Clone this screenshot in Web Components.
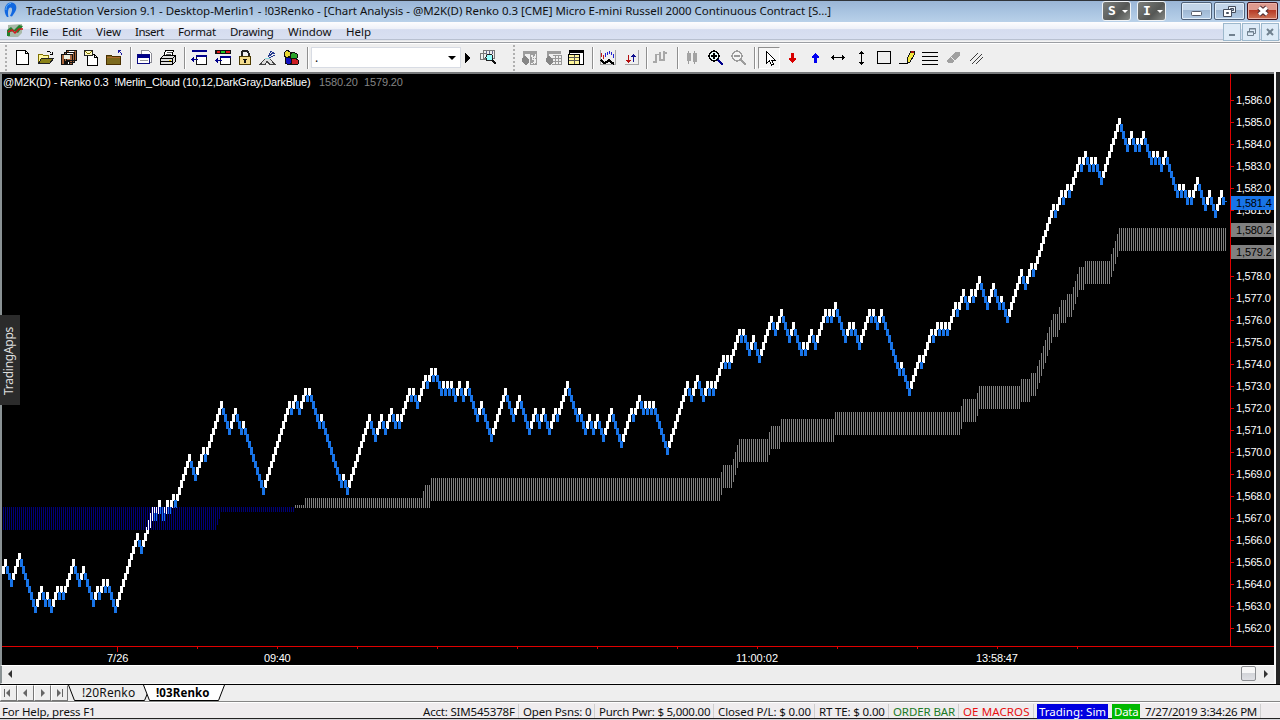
<!DOCTYPE html>
<html lang="en">
<head>
<meta charset="utf-8">
<title>TradeStation Version 9.1</title>
<style>
  :root {
    --ui-font: "Noto Sans", "Open Sans", sans-serif;
    --chart-font: "Liberation Sans", Arial, sans-serif;
  }
  html, body {
    margin: 0;
    width: 1280px;
    height: 720px;
    overflow: hidden;
    background: #efefef;
    font-family: var(--ui-font);
    color: #111;
  }
</style>
</head>
<body>
<trade-app></trade-app>
<script>
// Text whose letter spacing is set so that it is exactly `w` pixels wide
class FitText extends HTMLElement {
  constructor() {
    super();
    this.attachShadow({ mode: "open" });
  }

  connectedCallback() {
    this.shadowRoot.innerHTML = `<style>
        :host { display: block; white-space: pre; }
        span { display: inline-block; }
      </style><span><slot></slot></span>`;
    const span = this.shadowRoot.querySelector("span");
    const target = Number(this.getAttribute("w"));
    if (!target) return;
    const natural = span.offsetWidth;
    const size = this.textContent.length;
    span.style.letterSpacing = `${(target - natural) / size}px`;
    this.style.width = `${target}px`;
  }
}

class WindowButton extends HTMLElement {
  constructor() {
    super();
    this.attachShadow({ mode: "open" });
  }

  connectedCallback() {
    const icons = {
      min: `<rect x="10.500" y="9.500" width="10" height="4" rx="1" fill="#fff" stroke="#555c6b"/>`,
      restore: `<path d="M14.500 4.500h7v6h-7z" fill="#eef4fb" stroke="#444c5b"/><path d="M16.500 6.500h3v2h-3z" fill="#9db4d0" stroke="#444c5b"/><path d="M9.500 7.500h8v7h-8z" fill="#fff" stroke="#444c5b"/><path d="M12.500 10.500h2v1h-2z" fill="#9db4d0" stroke="#444c5b"/>`,
      close: `<path d="M12 5.500l8 7M20 5.500l-8 7" stroke="#4a2a2e" stroke-width="5"/><path d="M12 5.500l8 7M20 5.500l-8 7" stroke="#fff" stroke-width="3"/>`,
    };
    const kind = this.getAttribute("kind");
    this.shadowRoot.innerHTML = `
      <style>
        :host {
          display: block;
          box-sizing: border-box;
          width: 31px;
          height: 18px;
          border: 1px solid #4f6077;
          border-radius: 2px;
          box-shadow: inset 0 0 0 1px #e1edf8;
          background: linear-gradient(#c3d5e9 0 45%, #9fb7d2 46%, #b3cce6);
        }
        :host([kind="close"]) {
          border-color: #43141c;
          box-shadow: inset 0 0 0 1px #eab1a6;
          background: linear-gradient(#dd9a8e 0 45%, #b63a26 46%, #cf7558);
        }
        svg { display: block; margin: -1px; }
      </style>
      <svg width="31" height="18" fill="none">${icons[kind]}</svg>
    `;
  }
}

class LetterButton extends HTMLElement {
  constructor() {
    super();
    this.attachShadow({ mode: "open" });
    this.shadowRoot.innerHTML = `
      <style>
        :host {
          display: flex;
          box-sizing: border-box;
          width: 29px;
          height: 20px;
          padding-left: 5px;
          gap: 6px;
          align-items: center;
          border: 1px solid #eef2f5;
          border-radius: 3px;
          background: linear-gradient(135deg, #7c7f7c, #555755 60%, #868986);
          color: #fff;
          font: bold 13px/18px "DejaVu Sans Mono", monospace;
        }
        i { border: 3px solid transparent; border-top-color: #fff; border-bottom: 0; }
      </style>
      <slot></slot><i></i>
    `;
  }
}

class TitleBar extends HTMLElement {
  constructor() {
    super();
    this.attachShadow({ mode: "open" });
    this.shadowRoot.innerHTML = `
      <style>
        :host {
          display: flex;
          box-sizing: border-box;
          height: 22px;
          padding: 0 2px 0 3px;
          border-top: 1px solid #30343a;
          background: linear-gradient(#9ab5d6, #a9c4e1 50%, #b9d1e9);
        }
        svg { margin-right: 7px; }
        .title { font-size: 11.5px; line-height: 20px; flex: 1; }
        .letters { display: flex; gap: 6px; margin-right: 15px; }
        .buttons { display: flex; gap: 2px; padding-top: 1px; }
      </style>
      <svg width="16" height="20">
        <path d="M4 16C0 11 1 3 7 1.500c6-1 8 5 5 9.500L9 15.500 7 15c2-4 3-7.500 1-8.500C5 6 4.500 11 5.500 16z" fill="#1268e0"/>
        <path d="M3 9C3 5 5 2.500 8 2.500" stroke="#5fb4ff" fill="none"/>
      </svg>
      <div class="title"><fit-text w="805">TradeStation Version 9.1 - Desktop-Merlin1 - !03Renko - [Chart Analysis - @M2K(D) Renko 0.3 [CME] Micro E-mini Russell 2000 Continuous Contract [S...]</fit-text></div>
      <div class="letters"><letter-button>S</letter-button><letter-button>I</letter-button></div>
      <div class="buttons">
        <window-button kind="min"></window-button>
        <window-button kind="restore"></window-button>
        <window-button kind="close"></window-button>
      </div>
    `;
  }
}

class MenuBar extends HTMLElement {
  constructor() {
    super();
    this.attachShadow({ mode: "open" });
  }

  connectedCallback() {
    const items = [["File", 18], ["Edit", 20], ["View", 25], ["Insert", 29], ["Format", 38], ["Drawing", 44], ["Window", 44], ["Help", 25]];
    this.shadowRoot.innerHTML = `
      <style>
        :host {
          display: flex;
          box-sizing: border-box;
          height: 21px;
          padding: 0 1px 0 7px;
          border-bottom: 1px solid #9b9ea3;
          background: linear-gradient(#fdfdfe, #eef1f8 34%, #d5dcef 38%, #d9e0f1 84%, #aab4c8 86%, #f4f4f4 94%);
          font-size: 11.5px;
          line-height: 20px;
        }
        nav { display: flex; flex: 1; gap: 14px; margin-left: 7px; }
        .mdi { display: flex; gap: 1px; padding-top: 1px; }
        .mdi svg { width: 16px; height: 16px; border: 1px solid #9db8cc; background: #deebf7; }
      </style>
      <svg width="16" height="20">
        <path d="M1 3l14-1v9l-4 4H1z" fill="#a9b9a9"/>
        <path d="M0 14V8l4-3 3 3 5-5 4 1-5 7-4-2-4 1v4z" fill="#23812f"/>
        <path d="M1 10l4-2 3 3 4-4h4" stroke="#d3171e" stroke-width="1.500" fill="none"/>
      </svg>
      <nav>${items.map(([text, w]) => `<fit-text w="${w}">${text}</fit-text>`).join("")}</nav>
      <div class="mdi">
        <svg><path d="M5 10h6v2H5z" fill="#71818f"/></svg>
        <svg fill="none" stroke="#71818f"><path d="M6.500 7V4.500h6v5H11M6 5h7"/><path d="M4.500 7.500h6v4h-6zM4 8h7"/></svg>
        <svg stroke="#71818f" stroke-width="2"><path d="M5 5l6 6M11 5l-6 6"/></svg>
      </div>
    `;
  }
}

const ICONS = {
  page: `<path d="M1.500.5h9l3 3v11h-12z" fill="#fff" stroke="#000"/><path d="M10.500.5v3h3" fill="none" stroke="#000"/>`,
  open: `<path d="M.5 13.500v-9h4l1 1h5v3" fill="#fff8a0" stroke="#807000"/><path d="M.5 13.500l3-5h12l-4 5z" fill="#8a8218" stroke="#222"/><path d="M9 1h3v1H9zM12 2h1v1h-1zM12 4h3v1h-3zM14 2h1v3h-1z" fill="#000"/>`,
  saves: `<path d="M5.500.5h10v10h-10zM3.500 2.500h10v10h-10zM.5 4.500h11v10H.5z" fill="#a8663c" stroke="#111"/><path d="M3 5h6v4H3z" fill="#f1f1e0"/><path d="M3 11h6v3H3z" fill="#111"/><path d="M7 12h1v2H7z" fill="#fff"/><path d="M6 3h6v1H6zM8 1h5v1H8z" fill="#fff"/>`,
  mail: `<path d="M4.500 4.500h7l3 3v8h-10z" fill="#fff" stroke="#000"/><path d="M11.500 4.500v3h3" fill="none" stroke="#000"/><path d="M1.500.5h8v5h-8z" fill="#fffbc4" stroke="#222"/><path d="M2 1h1v1H2zM3 2h1v1H3zM4 3h3v1H4zM7 2h1v1H7zM8 1h1v1H8z" fill="#857800"/>`,
  folder: `<path d="M.5 14.500v-9h5l1 1h8v8z" fill="#7c6a1f" stroke="#4a3000"/><path d="M1 7h13v1H1z" fill="#b06d30"/><path d="M12 0h3v1h-3zM12 1h1v2h-1zM13 1h1v1h-1zM14 2h1v1h-1zM15 3h1v2h-1z" fill="#1a1aa0"/>`,
  window: `<path d="M4.500.5h7l3 3v9h-10z" fill="#fff" stroke="#8d8d96"/><path d="M.5 4.500h12v9H.5z" fill="#fff" stroke="#0a0a80"/><path d="M1 5h12v3H1z" fill="#00008b"/><path d="M3 10h8v1H3z" fill="#9a9a9a"/>`,
  print: `<path d="M5.500.5h8l-2 6h-8z" fill="#fff" stroke="#000"/><path d="M7 2.500h5M6 4.500h5" stroke="#555"/><path d="M.5 8.500l3-3h12v6l-3 3H.5z" fill="#ddd" stroke="#000"/><path d="M.5 8.500h12v6M1 11.500h11M12.500 8.500l3-3" fill="none" stroke="#000"/><path d="M9 10h2v1H9z" fill="#e2c900"/>`,
  windowBack: `<path d="M1 0h15v2H1z" fill="#00008b"/><path d="M5.500 5.500h10v9h-10z" fill="#fff" stroke="#111"/><path d="M5 5h11v2H5z" fill="#00008b"/><path d="M0 9h7v1H0zM1 8h2v3H1zM2 7h1v5H2z" fill="#00008b"/>`,
  windowTabs: `<path d="M0 0h16v4H0z" fill="#111"/><path d="M2 1h3v2H2z" fill="#e01616"/><path d="M6 1h4v2H6z" fill="#22c522"/><path d="M11 1h4v2h-4z" fill="#e01616"/><path d="M5.500 6.500h10v8h-10z" fill="#fff" stroke="#111"/><path d="M5 6h11v2H5z" fill="#00008b"/><path d="M0 10h7v1H0zM1 9h2v3H1zM2 8h1v5H2z" fill="#00008b"/>`,
  lock: `<path d="M4.500 6V3q0-2.500 3.500-2.500T11.500 3v3" fill="none" stroke="#222" stroke-width="2"/><path d="M2.500 6.500h11v8h-11z" fill="#f3dc8d" stroke="#4d3b00"/><path d="M6 9h4v1H9v3H7v-3H6z" fill="#111"/>`,
  dish: `<path d="M8 7l3-6M8 7l6-5M9 8l6-3M10 1l5 3" fill="none" stroke="#253a90"/><path d="M5 8h5v4H5z" fill="#8fd9dd"/><path d="M5 9l-5 5.500h5l2-3 3 3h5L10 9" fill="#ddd" stroke="#444"/>`,
  cubes: `<path d="M1 3l3-3 3 2v4l-3 2-3-2z" fill="#ead832" stroke="#111"/><path d="M7 4l3-2 4 2v4l-3 2-4-2z" fill="#2aa32a" stroke="#111"/><path d="M2 8l3-1 4 2v4l-3 2-4-2z" fill="#1010c0" stroke="#111"/><path d="M8 9l4-1 3 2v4l-4 1-3-1z" fill="#cc1d22" stroke="#111"/>`,
  play: `<path d="M1 3l5 5-5 5z" fill="#000"/>`,
  find: `<path d="M3.500.5h11v8h-11zM.5 3.500h6v6h-6z" fill="#eee" stroke="#777"/><path d="M6.500 1v3M9.500 1v3M12.500 1v3" stroke="#668"/><circle cx="9.500" cy="7.500" r="3.500" fill="#9ff" stroke="#222"/><path d="M12 10l4 4" stroke="#111" stroke-width="2"/>`,
  grayMoney: `<path d="M1 1h14v3H1zM1 4h2v5H1zM8 4h7v11H8z" fill="#9d9d9d"/><path d="M0 8l3-2 4 3v4l-3 2-4-3z" fill="#858585"/><path d="M9 5h2v2H9zM13 4h1v3h-1zM9 13h2v1H9zM4 5h3v1H4z" fill="#eee"/><path d="M13.500 7h-3v2.500h3v3h-3M12 6v8" stroke="#eee" fill="none"/>`,
  grayGrid: `<path d="M1 1h14v3H1zM1 4h2v5H1z" fill="#9d9d9d"/><path d="M7 5.500h8.500v9H6M6 8.500h9M6 11.500h9M9.500 5v9M12.500 5v9" stroke="#999" fill="none"/><path d="M0 8l3-2 4 3v4l-3 2-4-3z" fill="#858585"/>`,
  table: `<path d="M1.500.5h14v14h-10v-10h-4z" fill="#fff" stroke="#000"/><path d="M1 0h15v3H1z" fill="#000"/><path d="M.5 4.500h11v10H.5z" fill="#fff69a" stroke="#000"/><path d="M1 7.500h10M1 10.500h10M6.500 5v9" stroke="#555"/>`,
  study: `<path d="M.5 0v14.500H15M15.500 0v15" stroke="#a5a5a5" fill="none"/><path d="M1 3h1v4H1zM3 5h1v4H3z" fill="#c01818"/><path d="M5 3h1v4H5zM7 2h1v3H7zM9 1h1v3H9zM11 2h1v3h-1zM13 4h1v4h-1z" fill="#2222d0"/><path d="M1 10l3 3 3-1 2-2 2 2 3 2" stroke="#000" stroke-width="2" fill="none"/>`,
  sort: `<path d="M.5 14.500h14V0" fill="none" stroke="#a5a5a5"/><path d="M4 5h1v5h2l-2.500 3L2 10h2z" fill="#b41010"/><path d="M9 12h1V7h2L9.500 4 7 7h2z" fill="#101090"/>`,
  bars: `<path d="M3 4h2v9H3zM1 11h2v2H1zM5 4h2v1H5zM7 2h2v9H7zM9 9h2v2H9zM11 1h2v10h-2zM13 2h2v2h-2z" fill="#a8a8a8"/>`,
  candles: `<path d="M4.500 1v13M10.500 1v13" stroke="#9b9b9b"/><path d="M3 3h4v8H3zM9 3h4v9H9z" fill="#a3a3a3"/>`,
  zoomIn: `<circle cx="6" cy="6" r="5" fill="#eafcfc" stroke="#000" stroke-width="1.500"/><path d="M3 6h6M6 3v6" stroke="#000" stroke-width="2"/><path d="M10 10l5 5" stroke="#00008b" stroke-width="2.500"/>`,
  zoomOut: `<circle cx="6" cy="6" r="5" fill="#f5f5f5" stroke="#9c9c9c" stroke-width="1.500"/><path d="M3 6h6" stroke="#999" stroke-width="2"/><path d="M10 10l5 5" stroke="#9c9c9c" stroke-width="2.500"/>`,
  pointer: `<path d="M4.500 1.500v12l3-2.500 2 4 2-1-2-4h3.500z" fill="#fff" stroke="#000"/>`,
  down: `<path d="M6 3h3v5h2v1l-3.500 4L4 9V8h2z" fill="#d80000"/>`,
  up: `<path d="M6 13h3V8h2V7L7.500 3 4 7v1h2z" fill="#0000f0"/>`,
  horizontal: `<path d="M1 7h14v1H1zM2 6h1v3H2zM3 5h1v5H3zM13 6h1v3h-1zM12 5h1v5h-1z" fill="#000"/>`,
  vertical: `<path d="M8 1h1v14H8zM7 2h3v1H7zM6 3h5v1H6zM7 13h3v1H7zM6 12h5v1H6z" fill="#000"/>`,
  square: `<path d="M1.500 1.500h13v12h-13z" fill="none" stroke="#000"/>`,
  pencil: `<path d="M0 13.500h9" stroke="#000"/><path d="M8 13V9l4-8h3v4l-4 7z" fill="#f4e73c" stroke="#111"/><path d="M12 1h3v2h-3z" fill="#9c1010"/>`,
  lines: `<path d="M0 2.500h16M0 6.500h16M0 10.500h16M0 14.500h16" stroke="#000"/>`,
  eraser: `<path d="M1 10l8-8h5v3l-7 8H2z" fill="#a0a0a0"/><path d="M5 7l4 4" stroke="#eee"/>`,
  diagonals: `<path d="M1.500 10.500l8-8M3.500 13.500l10-10M7.500 13.500l7-7" stroke="#111" stroke-width=".8"/>`,
};

class ToolIcon extends HTMLElement {
  constructor() {
    super();
    this.attachShadow({ mode: "open" });
  }

  connectedCallback() {
    this.shadowRoot.innerHTML = `
      <style>
        :host { display: block; width: 16px; height: 16px; }
        svg { display: block; overflow: visible; }
      </style>
      <svg width="16" height="16" shape-rendering="crispEdges">${ICONS[this.getAttribute("name")]}</svg>
    `;
  }
}

class ToolBar extends HTMLElement {
  constructor() {
    super();
    this.attachShadow({ mode: "open" });
  }

  connectedCallback() {
    // [item, gap before it]
    const items = [
      ["grip", 5], ["page", 8], ["open", 7], ["saves", 7], ["mail", 6], ["folder", 7], ["sep", 8],
      ["window", 5], ["print", 7], ["sep", 8],
      ["windowBack", 5], ["windowTabs", 8], ["lock", 6], ["dish", 7], ["cubes", 7], ["sep", 8],
      ["combo", 2], ["play", 3], ["find", 0],
      ["grip", 17], ["grayMoney", 7], ["grayGrid", 8], ["table", 6], ["sep", 8],
      ["study", 6], ["sort", 8], ["sep", 6], ["bars", 4], ["sep", 9],
      ["candles", 5], ["zoomIn", 8], ["zoomOut", 7], ["sep", 7],
      ["pointer", 2], ["down", 5], ["up", 7], ["horizontal", 6], ["vertical", 7], ["square", 7],
      ["pencil", 7], ["lines", 7], ["eraser", 8], ["diagonals", 6],
    ];
    const item = ([name, gap]) => {
      const style = `style="margin-left:${gap}px"`;
      if (name === "grip" || name === "sep") return `<i class="${name}" ${style}></i>`;
      if (name === "combo") return `<div class="combo" ${style}><span>.</span><b></b></div>`;
      if (name === "pointer") return `<div class="pressed" ${style}><tool-icon name="pointer"></tool-icon></div>`;
      return `<tool-icon name="${name}" ${style}></tool-icon>`;
    };
    this.shadowRoot.innerHTML = `
      <style>
        :host {
          display: flex;
          box-sizing: border-box;
          height: 31px;
          padding-bottom: 1px;
          align-items: center;
          border-top: 1px solid #fff;
          border-bottom: 2px solid #77797b;
          background: #efefef;
        }
        .grip { width: 2px; height: 26px; background: repeating-linear-gradient(#b0b0b0 0 2px, #efefef 2px 4px); }
        .sep { box-sizing: border-box; width: 2px; height: 22px; border-left: 1px solid #8f8f8f; background: #fff; }
        .combo {
          display: flex;
          box-sizing: border-box;
          width: 150px;
          height: 21px;
          padding: 0 4px 0 3px;
          justify-content: space-between;
          align-items: center;
          border: 1px solid #d8dce4;
          background: #fff;
          font-size: 12px;
        }
        .combo b { border: 4px solid transparent; border-top-color: #000; border-bottom: 0; }
        .pressed {
          box-sizing: border-box;
          width: 22px;
          height: 22px;
          padding: 2px 3px;
          border: 1px solid #8f8f8f;
          border-right-color: #fff;
          border-bottom-color: #fff;
          background: #f6f6f6;
        }
      </style>
      ${items.map(item).join("")}
    `;
  }
}

// Renko bricks stand on a 2px grid; each one is a level above or below the one before.
// The list holds the columns at which the direction turns, starting with a rise.
const FIRST_COLUMN = 1;
const FIRST_LEVEL = 68;
const TURNS = [
  2, 5, 9, 17, 20, 22, 23, 25, 28, 29, 30, 31, 36, 39, 41, 46, 48, 49, 51, 52, 53, 57, 68, 70,
  76, 77, 79, 81, 83, 84, 86, 87, 94, 97, 101, 102, 110, 114, 117, 120, 121, 131, 144, 145, 147,
  149, 152, 153, 154, 159, 160, 170, 171, 173, 184, 187, 190, 192, 195, 197, 198, 199, 204, 205,
  206, 208, 212, 213, 215, 216, 217, 220, 221, 222, 223, 224, 225, 227, 229, 231, 233, 238, 240,
  245, 252, 256, 259, 264, 267, 269, 271, 274, 277, 278, 283, 288, 289, 292, 294, 296, 298, 301,
  305, 310, 315, 316, 319, 321, 322, 323, 324, 325, 326, 333, 343, 345, 348, 351, 353, 354, 355,
  356, 361, 362, 363, 364, 369, 370, 371, 374, 376, 379, 385, 387, 390, 394, 396, 400, 401, 402,
  405, 407, 412, 413, 414, 415, 417, 422, 424, 425, 426, 429, 434, 435, 436, 438, 440, 449, 450,
  454, 459, 460, 465, 466, 468, 469, 470, 471, 472, 473, 477, 478, 481, 483, 485, 486, 489, 493,
  496, 499, 500, 503, 510, 512, 515, 516, 526, 527, 530, 531, 533, 534, 539, 540, 542, 544, 545,
  546, 547, 550, 559, 563, 565, 567, 568, 569, 571, 575, 576, 577, 578, 580, 582, 588, 589, 590,
  591, 593, 594, 595, 598, 602, 604, 607, 610, 611,
];

class RenkoPlot extends HTMLElement {
  constructor() {
    super();
    this.attachShadow({ mode: "open" });
  }

  connectedCallback() {
    const top = 74;
    const levelY = (level) => Math.round(117.81 + level * 6.592) - top;
    const paths = { up: "", down: "", gray: "", blue: "" };

    let level = FIRST_LEVEL;
    let rising = true;
    let turn = 0;
    let high = Infinity;
    for (let col = FIRST_COLUMN; col <= 612; col++) {
      if (col <= 611) {
        if (col > FIRST_COLUMN) level += rising ? -1 : 1;
        const y = levelY(level);
        const height = levelY(level + 1) - y + 1;
        paths[rising ? "up" : "down"] += `M${col * 2} ${y}h3v${height}h-3z`;
        high = Math.min(high, y);
        if (col === TURNS[turn]) {
          rising = !rising;
          turn++;
        }
      }

      // the cloud trails the highest brick by five points
      const x = col * 2 + 1;
      const upper = high + 110;
      const middle = 507 - top;
      if (upper > middle) {
        const end = Math.min(upper + 1, 530 - top);
        paths.blue += `M${x} ${middle}h1V${end}h-1z`;
      } else {
        const end = Math.min(upper + 23, middle + 1);
        paths.gray += `M${x} ${upper}h1V${end}h-1z`;
      }
    }

    let ticks = "";
    for (let x = 197; x < 1100; x += 80) ticks += `M${x} 572h1v3h-1z`;
    for (let y = 26; y < 560; y += 22) ticks += `M1231 ${y}h3v1h-3z`;

    this.shadowRoot.innerHTML = `
      <style>
        :host { display: block; }
        svg { display: block; }
      </style>
      <svg width="1274" height="591" shape-rendering="crispEdges">
        <path d="${paths.up}" fill="#fff"/>
        <path d="${paths.down}" fill="#1874e8"/>
        <path d="${paths.blue}" fill="#000078"/>
        <path d="${paths.gray}" fill="#808080"/>
        <path d="M1225 127h2v1h-2z" fill="#1874e8"/>
        <path d="M2 572h1272v1H2zM1230 0h1v573h-1zM117 572h1v6h-1z${ticks}" fill="#e00000"/>
      </svg>
    `;
  }
}

class RenkoChart extends HTMLElement {
  constructor() {
    super();
    this.attachShadow({ mode: "open" });
  }

  connectedCallback() {
    let prices = "";
    for (let p = 1586; p >= 1562; p--) {
      const hidden = p === 1580 || p === 1579;
      prices += `<div>${hidden ? "" : `<fit-text w="35">1,${p - 1000}.0</fit-text>`}</div>`;
    }
    this.shadowRoot.innerHTML = `
      <style>
        :host {
          display: grid;
          grid-template: 591px / 1278px;
          position: relative;
          box-sizing: border-box;
          width: 1280px;
          height: 591px;
          border-left: 2px solid #8a9294;
          background: #000;
          color: #fff;
          font-family: var(--chart-font);
          font-size: 11px;
        }
        renko-plot { grid-area: 1 / 1; margin-left: -2px; }
        header { grid-area: 1 / 1; align-self: start; z-index: 1; display: flex; padding: 2px 0 0 1px; line-height: 13px; }
        header .value { color: #858585; }
        .prices { grid-area: 1 / 1; align-self: start; z-index: 1; justify-self: end; width: 44px; margin-top: 15px; }
        .prices div { height: 22px; line-height: 22px; }
        .tag {
          position: absolute;
          left: 1229px;
          width: 38px;
          height: 14px;
          padding-left: 5px;
          line-height: 15px;
          color: #000;
          background: #808080;
          z-index: 2;
        }
        .tag.last { background: #1874e8; }
        .time { position: absolute; top: 578px; line-height: 13px; z-index: 1; }
        .edge { position: absolute; left: 1272px; top: -2px; width: 4px; height: 612px; border-left: 2px solid #f6f6f6; background: #242424; z-index: 3; }
        .apps {
          position: absolute;
          left: -2px;
          top: 241px;
          width: 20px;
          height: 90px;
          background: #2b2b2b;
          color: #ddd;
          z-index: 3;
        }
        .apps fit-text {
          position: absolute;
          left: 1px;
          top: 80px;
          transform: rotate(-90deg);
          transform-origin: 0 0;
          font: 12px/16px var(--ui-font);
        }
      </style>
      <renko-plot></renko-plot>
      <header>
        <fit-text w="307">@M2K(D) - Renko 0.3  !Merlin_Cloud (10,12,DarkGray,DarkBlue)</fit-text>
        <fit-text class="value" w="39" style="margin-left:9px">1580.20</fit-text>
        <fit-text class="value" w="39" style="margin-left:6px">1579.20</fit-text>
      </header>
      <div class="prices">${prices}</div>
      <div class="tag last" style="top:122px"><fit-text w="36">1,581.4</fit-text></div>
      <div class="tag" style="top:149px"><fit-text w="36">1,580.2</fit-text></div>
      <div class="tag" style="top:171px"><fit-text w="36">1,579.2</fit-text></div>
      <fit-text class="time" w="21" style="left:105px">7/26</fit-text>
      <fit-text class="time" w="27" style="left:262px">09:40</fit-text>
      <fit-text class="time" w="42" style="left:734px">11:00:02</fit-text>
      <fit-text class="time" w="42" style="left:974px">13:58:47</fit-text>
      <div class="edge"></div>
      <div class="apps"><fit-text w="68">TradingApps</fit-text></div>
    `;
  }
}

class ScrollRow extends HTMLElement {
  constructor() {
    super();
    this.attachShadow({ mode: "open" });
    this.shadowRoot.innerHTML = `
      <style>
        :host {
          display: flex;
          box-sizing: border-box;
          width: 1274px;
          height: 19px;
          padding: 0 6px 2px 6px;
          align-items: center;
          border-left: 2px solid #8a9294;
          border-top: 1px solid #fff;
          border-bottom: 1px solid #f8f8f8;
          background: #ededed;
        }
        .left { border: 4px solid transparent; border-right-color: #333; border-left: 0; }
        .right { border: 4px solid transparent; border-left-color: #333; border-right: 0; margin-left: 8px; }
        .thumb {
          box-sizing: border-box;
          width: 15px;
          height: 15px;
          margin-left: auto;
          border: 1px solid #8b8d90;
          border-radius: 2px;
          background: linear-gradient(#f7f7f7 45%, #d3d5d9 50%, #dfe0e4);
        }
      </style>
      <i class="left"></i><div class="thumb"></div><i class="right"></i>
    `;
  }
}

class SheetTabs extends HTMLElement {
  constructor() {
    super();
    this.attachShadow({ mode: "open" });
    this.shadowRoot.innerHTML = `
      <style>
        :host {
          display: flex;
          box-sizing: border-box;
          height: 18px;
          border-top: 1px solid #000;
          border-bottom: 1px solid #858585;
          background: #eee;
          font-size: 12px;
        }
        .nav { box-sizing: border-box; width: 17px; height: 16px; border: 1px solid #fff; border-right-color: #777; border-bottom-color: #777; }
        .nav svg { display: block; }
        .tabs { display: grid; width: 160px; height: 16px; }
        .tabs svg { grid-area: 1 / 1; }
        .names { grid-area: 1 / 1; display: flex; gap: 21px; padding-left: 14px; line-height: 16px; z-index: 1; }
        .names .active { font-weight: bold; font-size: 11.5px; color: #000; }
      </style>
      <div class="nav"><svg width="15" height="14" fill="#666"><path d="M3 3h1v8H3zM9 3v8L5 7z"/></svg></div>
      <div class="nav"><svg width="15" height="14" fill="#666"><path d="M9 3v8L5 7z"/></svg></div>
      <div class="nav"><svg width="15" height="14" fill="#666"><path d="M6 3v8l4-4z"/></svg></div>
      <div class="nav"><svg width="15" height="14" fill="#666"><path d="M10 3h1v8h-1zM5 3v8l4-4z"/></svg></div>
      <div class="tabs">
        <svg width="160" height="16">
          <path d="M.5 0l6 15.500h70L83 0" fill="#eee" stroke="#000"/>
          <path d="M75.500 0l6 15.500h69L156.500 0" fill="#fff" stroke="#000"/>
        </svg>
        <div class="names">
          <fit-text w="53">!20Renko</fit-text>
          <fit-text class="active" w="54">!03Renko</fit-text>
        </div>
      </div>
    `;
  }
}

class StatusBar extends HTMLElement {
  constructor() {
    super();
    this.attachShadow({ mode: "open" });
    this.shadowRoot.innerHTML = `
      <style>
        :host {
          display: flex;
          box-sizing: border-box;
          height: 18px;
          padding: 1px 19px 0 2px;
          border-top: 1px solid #fff;
          border-bottom: 1px solid #d4d4d8;
          box-shadow: inset 0 -1px 0 #222;
          background: #efecee;
          font-size: 11.5px;
          line-height: 16px;
        }
        .help { flex: 1; }
        .cell { height: 14px; padding: 0 3px 0 4px; border-right: 1px solid #cfcfcf; }
        .box { height: 15px; padding: 0 2px; color: #fff; }
      </style>
      <div class="help"><fit-text w="93">For Help, press F1</fit-text></div>
      <div class="cell"><fit-text w="92">Acct: SIM545378F</fit-text></div>
      <div class="cell"><fit-text w="68">Open Psns: 0</fit-text></div>
      <div class="cell"><fit-text w="111">Purch Pwr: $ 5,000.00</fit-text></div>
      <div class="cell"><fit-text w="93">Closed P/L: $ 0.00</fit-text></div>
      <div class="cell"><fit-text w="66">RT TE: $ 0.00</fit-text></div>
      <div class="cell" style="color:#1c7a26"><fit-text w="62">ORDER BAR</fit-text></div>
      <div class="cell" style="color:#e81010"><fit-text w="67">OE MACROS</fit-text></div>
      <div class="box" style="background:#0000e0;margin-left:3px"><fit-text w="67">Trading: Sim</fit-text></div>
      <div class="box" style="background:#00b800;margin-left:4px"><fit-text w="24">Data</fit-text></div>
      <div class="cell" style="padding-left:5px"><fit-text w="112">7/27/2019 3:34:26 PM</fit-text></div>
    `;
  }
}

class TradeApp extends HTMLElement {
  constructor() {
    super();
    this.attachShadow({ mode: "open" });
    this.shadowRoot.innerHTML = `
      <style>
        :host { display: flex; flex-direction: column; width: 1280px; height: 720px; }
        :host > * { flex-shrink: 0; }
      </style>
      <title-bar></title-bar>
      <menu-bar></menu-bar>
      <tool-bar></tool-bar>
      <renko-chart></renko-chart>
      <scroll-row></scroll-row>
      <sheet-tabs></sheet-tabs>
      <status-bar></status-bar>
    `;
  }
}

customElements.define("fit-text", FitText);
customElements.define("window-button", WindowButton);
customElements.define("letter-button", LetterButton);
customElements.define("title-bar", TitleBar);
customElements.define("menu-bar", MenuBar);
customElements.define("tool-icon", ToolIcon);
customElements.define("tool-bar", ToolBar);
customElements.define("renko-plot", RenkoPlot);
customElements.define("renko-chart", RenkoChart);
customElements.define("scroll-row", ScrollRow);
customElements.define("sheet-tabs", SheetTabs);
customElements.define("status-bar", StatusBar);
customElements.define("trade-app", TradeApp);
</script>
</body>
</html>
